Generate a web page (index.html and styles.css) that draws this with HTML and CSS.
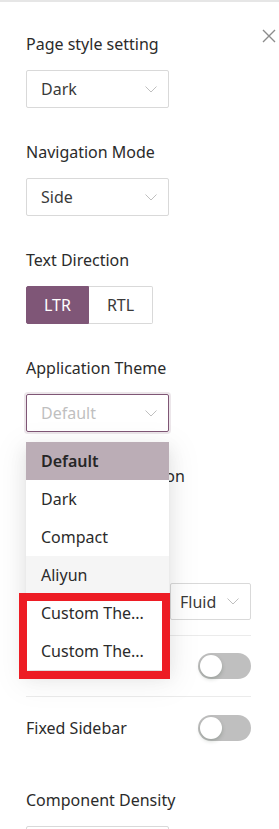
FILE: index.html
```html
<!DOCTYPE html>
<html lang="en">
<head>
    <meta charset="UTF-8">
    <meta name="viewport" content="width=device-width, initial-scale=1.0">
    <title>Settings</title>
    <link rel="stylesheet" href="styles.css">
</head>
<body>
    <div class="drawer">
        <button class="close" aria-label="Close">
            <svg width="14" height="14" viewBox="0 0 14 14"><path d="M1 1L13 13M13 1L1 13" stroke="#8c8c8c" stroke-width="1.4" fill="none"/></svg>
        </button>

        <div class="section">
            <div class="label">Page style setting</div>
            <div class="select">
                <span>Dark</span>
                <svg class="chev" width="12" height="7" viewBox="0 0 12 7"><path d="M0.5 0.5L6 6L11.5 0.5" stroke="#bfbfbf" fill="none"/></svg>
            </div>
        </div>

        <div class="section">
            <div class="label">Navigation Mode</div>
            <div class="select">
                <span>Side</span>
                <svg class="chev" width="12" height="7" viewBox="0 0 12 7"><path d="M0.5 0.5L6 6L11.5 0.5" stroke="#bfbfbf" fill="none"/></svg>
            </div>
        </div>

        <div class="section">
            <div class="label">Text Direction</div>
            <div class="radio-group">
                <span class="radio active">LTR</span>
                <span class="radio">RTL</span>
            </div>
        </div>

        <div class="section">
            <div class="label">Application Theme</div>
            <div class="select-wrap">
                <div class="select focused">
                    <span class="placeholder">Default</span>
                    <svg class="chev" width="12" height="7" viewBox="0 0 12 7"><path d="M0.5 0.5L6 6L11.5 0.5" stroke="#bfbfbf" fill="none"/></svg>
                </div>
                <div class="dropdown">
                    <div class="option selected">Default</div>
                    <div class="option">Dark</div>
                    <div class="option">Compact</div>
                    <div class="option hover">Aliyun</div>
                    <div class="option">Custom The...</div>
                    <div class="option">Custom The...</div>
                    <div class="mark"></div>
                </div>
            </div>
        </div>

        <div class="section list">
            <div class="label">Layout Configuration</div>
            <div class="rows">
                <div class="row top">
                    <span></span>
                    <div class="select small">
                        <span>Fluid</span>
                        <svg class="chev" width="12" height="7" viewBox="0 0 12 7"><path d="M0.5 0.5L6 6L11.5 0.5" stroke="#bfbfbf" fill="none"/></svg>
                    </div>
                </div>
                <div class="row">
                    <span></span>
                    <span class="switch"><span class="knob"></span></span>
                </div>
                <div class="row">
                    <span>Fixed Sidebar</span>
                    <span class="switch"><span class="knob"></span></span>
                </div>
            </div>
        </div>

        <div class="section">
            <div class="label">Component Density</div>
            <div class="select"></div>
        </div>
    </div>
</body>
</html>
```

FILE: styles.css
```css
body {
    margin: 0;
    font-family: 'Noto Sans', 'Open Sans', sans-serif;
    font-size: 16px;
    color: #2b2b2b;
    background: #fff;
    overflow: hidden;
}

.drawer {
    position: relative;
    border-top: 2px solid #e6e6e6;
    padding: 31px 28px 0 26px;
    height: 829px;
    box-sizing: border-box;
}

.close {
    position: absolute;
    top: 26px;
    right: 2px;
    border: none;
    background: none;
    padding: 0;
    width: 16px;
    height: 16px;
    display: flex;
    align-items: center;
    justify-content: center;
}

.section {
    margin-bottom: 33px;
}

.section.list {
    margin-bottom: 31px;
}

.label {
    line-height: 22px;
    margin-bottom: 15px;
}

.select {
    width: 143px;
    height: 38px;
    box-sizing: border-box;
    border: 1px solid #d9d9d9;
    border-radius: 2px;
    display: flex;
    align-items: center;
    justify-content: space-between;
    padding: 0 11px 0 14px;
    color: #3a3a3a;
}

.select.focused {
    border-color: #7f5675;
    box-shadow: 0 0 0 2px rgba(127, 86, 117, 0.15);
}

.placeholder {
    color: #bfbfbf;
}

.select.small {
    width: 81px;
    height: 37px;
    padding: 0 11px 0 9px;
}

.radio-group {
    display: flex;
}

.radio {
    height: 38px;
    box-sizing: border-box;
    display: flex;
    align-items: center;
    justify-content: center;
    width: 64px;
    border: 1px solid #d9d9d9;
    color: #3a3a3a;
}

.radio:first-child {
    border-radius: 2px 0 0 2px;
    width: 63px;
}

.radio:last-child {
    border-left: none;
    border-radius: 0 2px 2px 0;
}

.radio.active {
    background: #7f5677;
    border-color: #7f5677;
    color: #fff;
}

.select-wrap {
    position: relative;
}

.dropdown {
    position: absolute;
    top: 48px;
    left: 0;
    width: 143px;
    background: #fff;
    z-index: 10;
    box-shadow: 0 3px 6px -4px rgba(0, 0, 0, 0.12), 0 6px 16px 0 rgba(0, 0, 0, 0.08), 0 9px 28px 8px rgba(0, 0, 0, 0.05);
}

.option {
    height: 38px;
    line-height: 38px;
    padding-left: 15px;
    color: #2b2b2b;
    white-space: nowrap;
}

.option.selected {
    background: #bbadb6;
    font-weight: 600;
    color: #262626;
}

.option.hover {
    background: #f5f5f5;
}

.mark {
    position: absolute;
    left: -7px;
    top: 151px;
    width: 151px;
    height: 86px;
    box-sizing: border-box;
    border: 8px solid #ed1c24;
}

.rows {
    margin-top: 88px;
}

.row {
    height: 61px;
    box-sizing: border-box;
    display: flex;
    align-items: center;
    justify-content: space-between;
    border-bottom: 1px solid #ebebeb;
}

.row.top {
    align-items: flex-start;
    padding-top: 8px;
}

.row:last-child {
    border-bottom: none;
}

.switch {
    position: relative;
    width: 53px;
    height: 26px;
    border-radius: 13px;
    background: #bfbfbf;
}

.knob {
    position: absolute;
    top: 2px;
    left: 2px;
    width: 22px;
    height: 22px;
    border-radius: 50%;
    background: #fff;
    box-shadow: 0 2px 4px rgba(0, 35, 11, 0.2);
}
```
